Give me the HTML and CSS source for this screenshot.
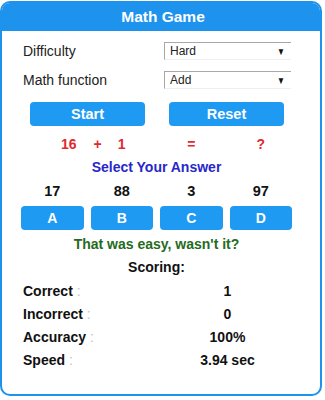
FILE: index.html
```html
<!DOCTYPE html>
<html>
<head>
<meta charset="utf-8">
<link rel="stylesheet" href="styles.css">
</head>
<body>
<div class="card">
  <div class="header">Math Game</div>
  <div class="content">
    <div class="form-row">
      <span class="label">Difficulty</span>
      <div class="select"><span>Hard</span><span class="arrow">▼</span></div>
    </div>
    <div class="form-row">
      <span class="label">Math function</span>
      <div class="select"><span>Add</span><span class="arrow">▼</span></div>
    </div>
    <div class="actions">
      <div class="btn">Start</div>
      <div class="btn">Reset</div>
    </div>
    <div class="grid equation">
      <div class="eq-first">16</div>
      <div class="eq-second"><span class="plus">+</span><span>1</span><span></span></div>
      <div>=</div>
      <div>?</div>
    </div>
    <div class="prompt">Select Your Answer</div>
    <div class="grid numbers">
      <div>17</div><div>88</div><div>3</div><div>97</div>
    </div>
    <div class="grid choices">
      <div class="btn">A</div><div class="btn">B</div><div class="btn">C</div><div class="btn">D</div>
    </div>
    <div class="message">That was easy, wasn't it?</div>
    <div class="scoring">Scoring:</div>
    <div class="scores">
      <div class="score-row"><span class="s-label">Correct <span class="colon">:</span></span><span class="s-value">1</span></div>
      <div class="score-row"><span class="s-label">Incorrect <span class="colon">:</span></span><span class="s-value">0</span></div>
      <div class="score-row"><span class="s-label">Accuracy <span class="colon">:</span></span><span class="s-value">100%</span></div>
      <div class="score-row"><span class="s-label">Speed <span class="colon">:</span></span><span class="s-value">3.94 sec</span></div>
    </div>
  </div>
</div>
</body>
</html>
```

FILE: styles.css
```css
html, body {
  margin: 0;
  padding: 0;
  background: #ffffff;
}
body {
  font-family: "Liberation Sans", Arial, sans-serif;
  color: #111;
}
.card {
  box-sizing: border-box;
  width: 322px;
  height: 395px;
  margin-top: 1px;
  border: 2px solid #1e93ee;
  border-radius: 10px;
  overflow: hidden;
  background: #fff;
}
.header {
  height: 28px;
  line-height: 27px;
  background: #1e93ee;
  color: #fff;
  font-weight: bold;
  font-size: 15.5px;
  text-align: center;
  padding-left: 4px;
}
.content {
  padding-left: 19px;
  width: 271px;
}
.form-row {
  display: flex;
  align-items: center;
  height: 18px;
  margin-top: 11px;
}
.label {
  width: 141px;
  padding-left: 2px;
  font-size: 14px;
  line-height: 18px;
  color: #222;
}
.select {
  box-sizing: border-box;
  width: 127px;
  height: 18px;
  display: flex;
  align-items: center;
  justify-content: space-between;
  border-top: 1px solid #a8a8a8;
  border-left: 1px solid #a8a8a8;
  border-bottom: 1px solid #efefef;
  padding: 0 5px 0 5px;
  font-size: 12px;
  color: #222;
}
.arrow {
  font-size: 10px;
  color: #111;
  transform: scaleX(0.8);
}
.actions {
  display: flex;
  gap: 24px;
  margin-top: 13px;
  padding-left: 9px;
}
.btn {
  background: #1e9af2;
  color: #fff;
  font-weight: bold;
  font-size: 14.5px;
  text-align: center;
  border-radius: 4px;
  height: 24px;
  line-height: 24px;
}
.actions .btn {
  width: 115px;
}
.grid {
  display: grid;
  grid-template-columns: repeat(4, 1fr);
  column-gap: 7px;
  text-align: center;
  font-weight: bold;
  font-size: 14px;
  line-height: 18px;
}
.equation {
  margin-top: 9px;
  color: #df2a30;
}
.eq-first {
  text-align: right;
  padding-right: 7px;
}
.eq-second {
  display: grid;
  grid-template-columns: 1fr auto 1fr;
}
.plus {
  text-align: left;
  padding-left: 3px;
}
.prompt {
  margin-top: 5px;
  text-align: center;
  color: #2828c8;
  font-weight: bold;
  font-size: 14px;
  line-height: 18px;
}
.numbers {
  margin-top: 6px;
  color: #111;
  font-size: 14.5px;
}
.choices {
  margin-top: 6px;
}
.choices .btn {
  font-size: 14px;
}
.message {
  margin-top: 5px;
  text-align: center;
  color: #266a1e;
  font-weight: bold;
  font-size: 14px;
  line-height: 18px;
}
.scoring {
  margin-top: 5px;
  text-align: center;
  font-weight: bold;
  font-size: 14px;
  line-height: 18px;
  color: #111;
}
.scores {
  margin-top: 6px;
  display: flex;
  flex-direction: column;
  gap: 5px;
}
.score-row {
  display: flex;
  font-weight: bold;
  font-size: 14px;
  line-height: 18px;
  color: #111;
}
.s-label {
  width: 141px;
  padding-left: 2px;
}
.colon {
  color: #c4c4c4;
  font-weight: normal;
}
.s-value {
  width: 130px;
  text-align: center;
}
```
